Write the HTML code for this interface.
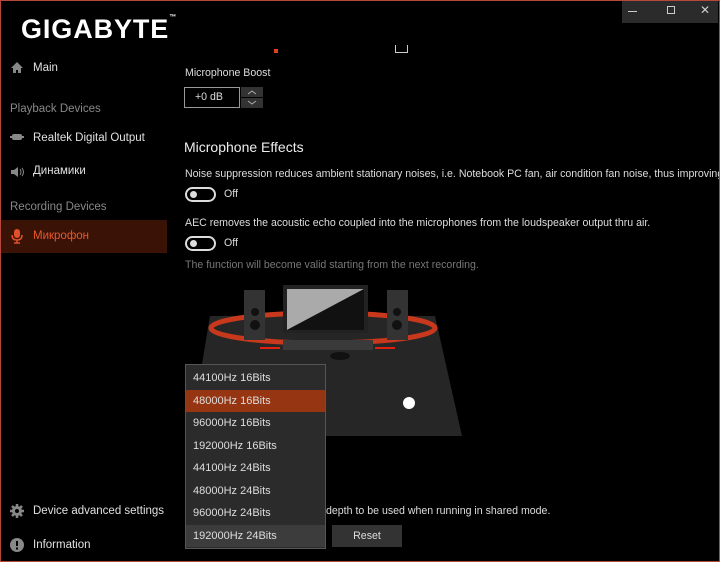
<!DOCTYPE html>
<html><head><meta charset="utf-8"><style>
*{margin:0;padding:0;box-sizing:border-box}
body{width:720px;height:562px;background:#000;font-family:"Liberation Sans",sans-serif;color:#ddd;position:relative;overflow:hidden;font-size:12px}
.frame{position:absolute;inset:0;border:1px solid #b5483a;pointer-events:none;z-index:20}
.a{position:absolute;white-space:nowrap}
.logo{left:21px;top:14px;font-size:27px;font-weight:bold;color:#fff;letter-spacing:0.9px}
.nav{left:33px;font-size:11.5px;color:#e0e0e0}
.hdr{left:10px;font-size:11.5px;color:#888}
.ic{position:absolute;left:10px}
.sel{left:1px;top:220px;width:166px;height:33px;background:#3a1306}
.tb{right:2px;top:1px;width:96px;height:22px;background:#2b2b2b}
.tog{width:31px;height:15px;border:2px solid #ddd;border-radius:8px;position:absolute}
.tog:after{content:"";position:absolute;left:3px;top:2px;width:7px;height:7px;border-radius:50%;background:#ddd}
.menu{left:185px;top:364px;width:141px;height:185px;background:#2b2b2b;border:1px solid #555;padding-top:2px}
.menu div{height:22.5px;line-height:22.5px;padding-left:7px;color:#ddd;font-size:11px}
.t{font-size:10.6px}
</style></head><body>
<div class="frame"></div>
<div class="a logo">GIGABYTE<span style="font-size:7px;vertical-align:top">™</span></div>
<div class="a sel"></div>
<svg class="ic" style="top:61px" width="14" height="13"><path d="M7 1 L1 7 L3 7 L3 12 L6 12 L6 9 L8 9 L8 12 L11 12 L11 7 L13 7Z" fill="#888"/></svg>
<div class="a nav" style="top:62px">Main</div>
<div class="a hdr" style="top:103px">Playback Devices</div>
<svg class="ic" style="top:133px" width="14" height="8"><rect x="2" y="1" width="10" height="6" rx="2" fill="#888"/><rect x="0" y="3" width="14" height="2" fill="#888"/></svg>
<div class="a nav" style="top:132px">Realtek Digital Output</div>
<svg class="ic" style="top:166px" width="14" height="12"><path d="M1 4h3l4-3v10l-4-3H1z" fill="#888"/><path d="M10 3q2 3 0 6M12 2q3 4 0 8" stroke="#888" fill="none"/></svg>
<div class="a nav" style="top:165px">Динамики</div>
<div class="a hdr" style="top:201px">Recording Devices</div>
<svg class="ic" style="top:229px" width="14" height="15"><rect x="4" y="0" width="6" height="9" rx="3" fill="#e0502a"/><path d="M2 6q0 5 5 5q5 0 5-5M7 11v3M4 14h6" stroke="#e0502a" stroke-width="1.5" fill="none"/></svg>
<div class="a nav" style="top:230px;color:#e8582e">Микрофон</div>
<svg class="ic" style="top:504px" width="14" height="14"><path d="M7 0v14M0 7h14M2 2l10 10M12 2L2 12" stroke="#888" stroke-width="2.5"/><circle cx="7" cy="7" r="5" fill="#888"/><circle cx="7" cy="7" r="2" fill="#000"/></svg>
<div class="a nav" style="top:505px">Device advanced settings</div>
<svg class="ic" style="top:538px" width="14" height="14"><circle cx="7" cy="7" r="7" fill="#888"/><rect x="6" y="3" width="2" height="5" fill="#000"/><rect x="6" y="9.5" width="2" height="2" fill="#000"/></svg>
<div class="a nav" style="top:539px">Information</div>

<div class="a tb"></div>
<div class="a" style="left:628px;top:11px;width:9px;height:1px;background:#ccc"></div>
<div class="a" style="left:667px;top:6px;width:8px;height:8px;border:1px solid #ccc"></div>
<div class="a" style="left:700px;top:3px;color:#ccc;font-size:12px">✕</div>
<div class="a" style="left:274px;top:49px;width:4px;height:4px;background:#e04020"></div>
<div class="a" style="left:395px;top:45px;width:13px;height:8px;border:1px solid #ccc;border-top:none"></div>

<div class="a t" style="left:185px;top:67px">Microphone Boost</div>
<div class="a t" style="left:184px;top:87px;width:56px;height:21px;border:1px solid #999;padding:3px 0 0 10px">+0 dB</div>
<div class="a" style="left:241px;top:87px;width:22px;height:10px;background:#333"></div>
<div class="a" style="left:241px;top:98px;width:22px;height:10px;background:#333"></div>
<svg class="a" style="left:241px;top:87px" width="22" height="21"><path d="M7 7l4-3 4 3M7 14l4 3 4-3" stroke="#aaa" fill="none"/></svg>

<div class="a" style="left:184px;top:139px;font-size:14px;color:#eee">Microphone Effects</div>
<div class="a t" style="left:185px;top:168px">Noise suppression reduces ambient stationary noises, i.e. Notebook PC fan, air condition fan noise, thus improving s</div>
<div class="tog" style="left:185px;top:187px"></div>
<div class="a t" style="left:224px;top:188px">Off</div>
<div class="a t" style="left:185px;top:217px">AEC removes the acoustic echo coupled into the microphones from the loudspeaker output thru air.</div>
<div class="tog" style="left:185px;top:236px"></div>
<div class="a t" style="left:224px;top:237px">Off</div>
<div class="a t" style="left:185px;top:259px;color:#777">The function will become valid starting from the next recording.</div>

<svg class="a" style="left:180px;top:270px" width="300" height="180">
<polygon points="30,46 255,46 282,166 10,166" fill="#262626"/>
<ellipse cx="143" cy="58" rx="112" ry="15" fill="none" stroke="#c8381c" stroke-width="5"/>
<rect x="64" y="20" width="21" height="50" fill="#333"/><circle cx="75" cy="42" r="4" fill="#111"/><circle cx="75" cy="55" r="5" fill="#111"/>
<rect x="207" y="20" width="21" height="50" fill="#333"/><circle cx="217" cy="42" r="4" fill="#111"/><circle cx="217" cy="55" r="5" fill="#111"/>
<rect x="103" y="15" width="85" height="48" fill="#222"/>
<polygon points="107,19 184,19 107,60" fill="#aaa"/><polygon points="184,19 184,60 107,60" fill="#111"/>
<rect x="103" y="70" width="90" height="10" fill="#3a3a3a"/>
<ellipse cx="160" cy="86" rx="10" ry="4" fill="#111"/>
<path d="M100 78l-20 0M195 78l20 0" stroke="#e02010" stroke-width="2"/>
<circle cx="229" cy="133" r="6" fill="#fff"/>
</svg>

<div class="a menu">
<div>44100Hz 16Bits</div>
<div style="background:#963511">48000Hz 16Bits</div>
<div>96000Hz 16Bits</div>
<div>192000Hz 16Bits</div>
<div>44100Hz 24Bits</div>
<div>48000Hz 24Bits</div>
<div>96000Hz 24Bits</div>
<div style="background:#3c3c3c">192000Hz 24Bits</div>
</div>
<div class="a t" style="left:326px;top:505px">depth to be used when running in shared mode.</div>
<div class="a t" style="left:332px;top:525px;width:70px;height:22px;background:#333;text-align:center;line-height:22px">Reset</div>
</body></html>
